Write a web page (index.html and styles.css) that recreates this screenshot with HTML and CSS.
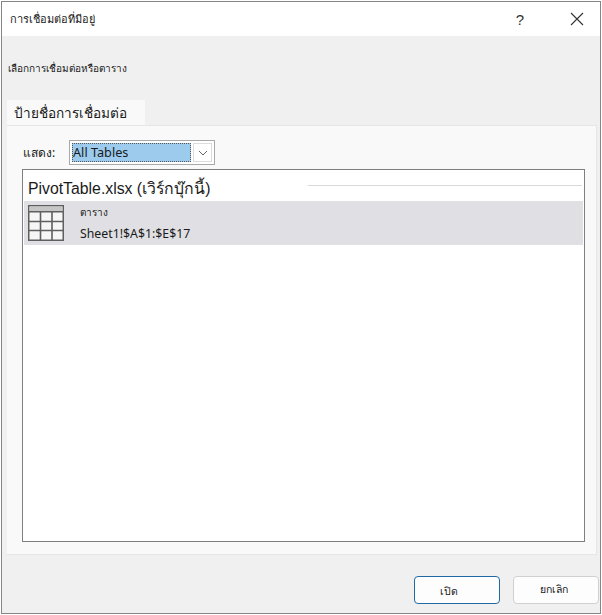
FILE: index.html
```html
<!DOCTYPE html>
<html lang="th">
<head>
    <meta charset="UTF-8">
    <title>การเชื่อมต่อที่มีอยู่</title>
    <link rel="stylesheet" href="styles.css">
</head>
<body>
    <div class="dialog">
        <!-- Title bar -->
        <div class="title-bar">
            <span class="title">การเชื่อมต่อที่มีอยู่</span>
            <span class="help">?</span>
            <svg class="close" width="14" height="14" viewBox="0 0 14 14">
                <path d="M1 1L13 13M13 1L1 13" stroke="#333" stroke-width="1.1" fill="none"/>
            </svg>
        </div>
        <div class="content">
            <p class="intro">เลือกการเชื่อมต่อหรือตาราง</p>
            <div class="tab">ป้ายชื่อการเชื่อมต่อ</div>
            <div class="panel">
                <!-- Show filter -->
                <div class="filter">
                    <span class="filter-label">แสดง:</span>
                    <div class="combo">
                        <span class="combo-value">All Tables</span>
                        <span class="combo-btn">
                            <svg width="10" height="6" viewBox="0 0 10 6">
                                <path d="M1 1L5 5L9 1" stroke="#666" stroke-width="1" fill="none"/>
                            </svg>
                        </span>
                    </div>
                </div>
                <!-- Connection list -->
                <div class="list">
                    <div class="group">
                        <span class="group-name">PivotTable.xlsx (เวิร์กบุ๊กนี้)</span>
                        <span class="group-line"></span>
                    </div>
                    <div class="row">
                        <svg class="table-icon" width="36" height="36" viewBox="0 0 36 36">
                            <rect x="0.75" y="0.75" width="34.5" height="34.5" fill="#f6f6f6" stroke="#5f5f5f" stroke-width="1.5"/>
                            <rect x="1.5" y="1.5" width="33" height="5" fill="#c6c6c6"/>
                            <path d="M1 6.75H35M12.5 6.75V35M24 6.75V35M1 16.5H35M1 25.5H35" stroke="#5f5f5f" stroke-width="1.6" fill="none"/>
                        </svg>
                        <div class="row-text">
                            <span class="row-name">ตาราง</span>
                            <span class="row-range">Sheet1!$A$1:$E$17</span>
                        </div>
                    </div>
                </div>
            </div>
            <div class="buttons">
                <button class="btn btn-default">เปิด</button>
                <button class="btn btn-cancel">ยกเลิก</button>
            </div>
        </div>
    </div>
</body>
</html>
```

FILE: styles.css
```css
* {
    margin: 0;
    padding: 0;
    box-sizing: border-box;
}
body {
    background: #fff;
    padding: 1px 0 0 1px;
    font-family: "Noto Sans", "Liberation Sans", sans-serif;
    color: #1a1a1a;
}
.dialog {
    width: 600px;
    height: 613px;
    border: 1px solid #858585;
    background: #f0f0f0;
    display: flex;
    flex-direction: column;
}
/* Title bar */
.title-bar {
    height: 34px;
    background: #fff;
    display: flex;
    align-items: center;
    padding: 0 16px 0 8px;
    flex-shrink: 0;
}
.title {
    font-size: 11px;
    flex: 1;
}
.help {
    font-family: "Liberation Sans", sans-serif;
    font-size: 15px;
    color: #333;
    margin-right: 46px;
}
/* Main area */
.content {
    flex: 1;
    display: flex;
    flex-direction: column;
    padding: 0 1px 8px 5px;
}
.intro {
    font-size: 10px;
    line-height: 14px;
    margin-top: 25px;
    margin-left: 1px;
}
.tab {
    width: 138px;
    height: 25px;
    margin-top: 25px;
    background: #f9f9f9;
    font-size: 13.6px;
    line-height: 25px;
    padding-left: 7px;
}
.panel {
    height: 430px;
    background: #f9f9f9;
    border-top: 1px solid #e6e6e6;
    border-bottom: 1px solid #e6e6e6;
    border-right: 1px solid #e6e6e6;
    padding: 14px 11px 0 15px;
    width: 590px;
}
.filter {
    display: flex;
    align-items: center;
    height: 25px;
}
.filter-label {
    font-size: 12px;
    width: 47px;
    padding-left: 1px;
}
.combo {
    width: 146px;
    height: 25px;
    border: 1px solid #a9a9a9;
    padding: 2px;
    display: flex;
    background: #fff;
}
.combo-value {
    width: 119px;
    background: #9ccbee;
    border: 1px dotted #555;
    font-family: "Noto Sans", sans-serif;
    font-size: 12.7px;
    line-height: 17px;
}
.combo-btn {
    flex: 1;
    margin-left: 2px;
    border: 1px solid #dcdcdc;
    display: flex;
    align-items: center;
    justify-content: center;
}
.list {
    width: 563px;
    height: 373px;
    margin-top: 4px;
    border: 1px solid #7f7f7f;
    background: #fff;
    padding: 0 1px;
}
.group {
    height: 31px;
    display: flex;
    align-items: center;
    padding-left: 4px;
}
.group-name {
    font-family: "Liberation Sans", sans-serif;
    font-size: 15.8px;
    white-space: nowrap;
    padding-top: 6px;
}
.group-line {
    flex: 1;
    height: 1px;
    background: #d9d9d9;
    margin-right: 1px;
    margin-left: 98px;
}
.row {
    height: 44px;
    background: #e0e0e4;
    display: flex;
    align-items: center;
    padding-left: 4px;
}
.table-icon {
    flex-shrink: 0;
}
.row-text {
    display: flex;
    flex-direction: column;
    margin-left: 16px;
    gap: 7px;
}
.row-name {
    font-size: 10px;
    line-height: 14px;
}
.row-range {
    font-family: "Noto Sans", sans-serif;
    font-size: 12.3px;
    line-height: 16px;
}
/* Bottom buttons */
.buttons {
    display: flex;
    justify-content: flex-end;
    gap: 13px;
    margin-top: 21px;
}
.btn {
    width: 86px;
    height: 28px;
    background: #fdfdfd;
    border: 1px solid #d0d0d0;
    border-radius: 4px;
    font-family: "Noto Sans", "Liberation Sans", sans-serif;
    font-size: 10.5px;
    color: #1a1a1a;
}
.btn-default {
    border: 1px solid #1f6aa5;
    padding: 2px 17px 0 0;
}
.btn-cancel {
    padding: 0 5px 2px 0;
}
```
